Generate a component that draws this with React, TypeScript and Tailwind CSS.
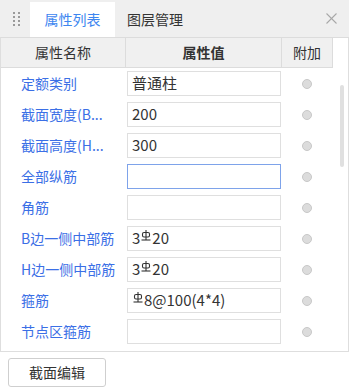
import React from "react";

const Steel = () => (
  <svg width="10" height="11" viewBox="0 0 10 11" className="inline-block -translate-y-[3px] mx-[1px]">
    <rect x="1.5" y="2.5" width="7" height="4.5" rx="1.5" fill="none" stroke="#333" strokeWidth="1.1" />
    <line x1="5" y1="0" x2="5" y2="10" stroke="#333" strokeWidth="1.1" />
    <line x1="0.5" y1="10" x2="9.5" y2="10" stroke="#333" strokeWidth="1.1" />
  </svg>
);

type Row = { label: string; value: React.ReactNode; focus?: boolean };

const rows: Row[] = [
  { label: "定额类别", value: "普通柱" },
  { label: "截面宽度(B...", value: "200" },
  { label: "截面高度(H...", value: "300" },
  { label: "全部纵筋", value: "", focus: true },
  { label: "角筋", value: "" },
  { label: "B边一侧中部筋", value: <>3<Steel />20</> },
  { label: "H边一侧中部筋", value: <>3<Steel />20</> },
  { label: "箍筋", value: <><Steel />8@100(4*4)</> },
  { label: "节点区箍筋", value: "" },
];

export default function App() {
  return (
    <div
      className="w-[349px] h-[390px] bg-white overflow-hidden text-[#333]"
      style={{ fontFamily: '"Microsoft YaHei", "Noto Sans CJK SC", "Noto Sans", sans-serif' }}
    >
      {/* tab bar */}
      <div className="h-[37px] bg-[#efefef] flex items-end relative">
        <div className="w-[30px] h-full flex items-center justify-center">
          <div className="grid grid-cols-2 gap-x-[3px] gap-y-[2px] ml-[2px]">
            {Array.from({ length: 8 }).map((_, i) => (
              <div key={i} className="w-[2px] h-[2px] bg-[#9a9a9a]" />
            ))}
          </div>
        </div>
        <div className="h-[35px] w-[85px] bg-white flex items-center justify-center text-[14px] text-[#3d86f0]">
          属性列表
        </div>
        <div className="h-[35px] px-[12px] flex items-center text-[14px] text-[#333]">图层管理</div>
        <div className="absolute right-[12px] top-[13px]">
          <svg width="11" height="11" viewBox="0 0 11 11">
            <line x1="0.5" y1="0.5" x2="10.5" y2="10.5" stroke="#a8a8a8" strokeWidth="1.1" />
            <line x1="10.5" y1="0.5" x2="0.5" y2="10.5" stroke="#a8a8a8" strokeWidth="1.1" />
          </svg>
        </div>
      </div>

      {/* panel */}
      <div className="h-[315px] border border-[#dedede] border-t-[#dcdcdc] relative">
        <div className="flex h-[30px] bg-[#f0f0f0] border-b border-[#dcdcdc] w-[332px] text-[14px]">
          <div className="w-[125px] border-r border-[#dcdcdc] flex items-center justify-center text-[#333]">属性名称</div>
          <div className="w-[156px] border-r border-[#dcdcdc] flex items-center justify-center font-bold text-[#333]">属性值</div>
          <div className="flex-1 border-r border-[#dcdcdc] flex items-center justify-center text-[#333]">附加</div>
        </div>
        <div className="flex flex-col">
          {rows.map((r, i) => (
            <div key={i} className="h-[31px] flex items-center">
              <div className="w-[125px] pl-[20px] text-[14px] text-[#3b6fe6] whitespace-nowrap overflow-hidden">
                {r.label}
              </div>
              <div
                className={`w-[154px] h-[25px] ml-[1px] border ${
                  r.focus ? "border-[#7ea3ea]" : "border-[#dfdfdf]"
                } flex items-center pl-[4px] text-[15px] text-[#333] whitespace-nowrap`}
              >
                {r.value}
              </div>
              <div className="w-[51px] flex justify-center">
                <div className="w-[10px] h-[10px] rounded-full bg-[#dcdcdc] border border-[#c8c8c8]" />
              </div>
            </div>
          ))}
        </div>
        <div className="absolute right-[4px] top-[47px] w-[4px] h-[82px] rounded-full bg-[#e0e0e0]" />
      </div>

      {/* footer */}
      <div className="pt-[6px] pl-[8px]">
        <button className="w-[98px] h-[29px] border border-[#cfcfcf] rounded-[3px] bg-white text-[14px] text-[#333]">
          截面编辑
        </button>
      </div>
    </div>
  );
}
